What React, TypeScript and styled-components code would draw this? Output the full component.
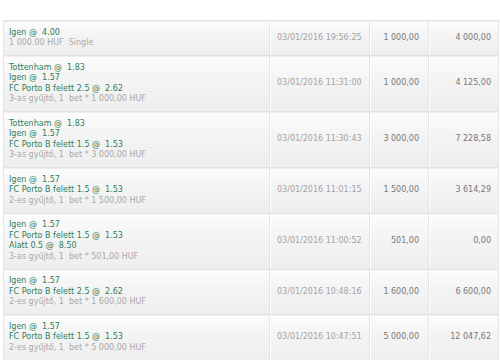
import * as React from 'react';
import styled, { createGlobalStyle } from 'styled-components';

const GlobalStyle = createGlobalStyle`
  html, body {
    margin: 0;
    padding: 0;
    background: #ffffff;
  }
  body {
    font-family: 'DejaVu Sans', Verdana, sans-serif;
  }
`;

const Page = styled.div`
  width: 500px;
  height: 360px;
  overflow: hidden;
  padding: 20px 0 0 3px;
  box-sizing: border-box;
`;

const Table = styled.table`
  width: 495px;
  table-layout: fixed;
  border-collapse: collapse;
  border-left: 1px solid #e6e6e6;
  border-right: 1px solid #e6e6e6;
  font-size: 8px;
`;

const Col = styled.col<{ $width: number }>`
  width: ${(p) => p.$width}px;
`;

const Row = styled.tr`
  border-top: 1px solid #e2e2e2;
  background: linear-gradient(#fcfcfc, #f4f4f4 40%, #eeeeee);
`;

interface CellProps {
  $align?: 'left' | 'right';
  $color?: string;
  $padRight?: number;
}

const Cell = styled.td<CellProps>`
  padding: 6.5px ${(p) => p.$padRight ?? 7}px 6.5px 7px;
  vertical-align: middle;
  text-align: ${(p) => p.$align || 'left'};
  color: ${(p) => p.$color || '#777777'};
  line-height: 10.5px;
  white-space: pre;
  border-left: 1px solid #e4e4e4;
  box-shadow: inset 1px 0 0 #ffffff;

  &:first-child {
    border-left: none;
    box-shadow: none;
    padding-left: 5px;
  }
`;

const Pick = styled.div`
  color: #2f7d58;
`;

const Summary = styled.div`
  color: #a9a9a9;
`;

interface Bet {
  picks: string[];
  summary: string;
  date: string;
  stake: string;
  payout: string;
}

const bets: Bet[] = [
  {
    picks: ['Igen @  4.00'],
    summary: '1 000.00 HUF  Single',
    date: '03/01/2016 19:56:25',
    stake: '1 000,00',
    payout: '4 000,00',
  },
  {
    picks: ['Tottenham @  1.83', 'Igen @  1.57', 'FC Porto B felett 2.5 @  2.62'],
    summary: '3-as gyűjtő, 1  bet * 1 000,00 HUF',
    date: '03/01/2016 11:31:00',
    stake: '1 000,00',
    payout: '4 125,00',
  },
  {
    picks: ['Tottenham @  1.83', 'Igen @  1.57', 'FC Porto B felett 1.5 @  1.53'],
    summary: '3-as gyűjtő, 1  bet * 3 000,00 HUF',
    date: '03/01/2016 11:30:43',
    stake: '3 000,00',
    payout: '7 228,58',
  },
  {
    picks: ['Igen @  1.57', 'FC Porto B felett 1.5 @  1.53'],
    summary: '2-es gyűjtő, 1  bet * 1 500,00 HUF',
    date: '03/01/2016 11:01:15',
    stake: '1 500,00',
    payout: '3 614,29',
  },
  {
    picks: ['Igen @  1.57', 'FC Porto B felett 1.5 @  1.53', 'Alatt 0.5 @  8.50'],
    summary: '3-as gyűjtő, 1  bet * 501,00 HUF',
    date: '03/01/2016 11:00:52',
    stake: '501,00',
    payout: '0,00',
  },
  {
    picks: ['Igen @  1.57', 'FC Porto B felett 2.5 @  2.62'],
    summary: '2-es gyűjtő, 1  bet * 1 600,00 HUF',
    date: '03/01/2016 10:48:16',
    stake: '1 600,00',
    payout: '6 600,00',
  },
  {
    picks: ['Igen @  1.57', 'FC Porto B felett 1.5 @  1.53'],
    summary: '2-es gyűjtő, 1  bet * 5 000,00 HUF',
    date: '03/01/2016 10:47:51',
    stake: '5 000,00',
    payout: '12 047,62',
  },
];

const App = () => (
  <>
    <GlobalStyle />
    <Page>
      <Table>
        <colgroup>
          <Col $width={266} />
          <Col $width={100} />
          <Col $width={59} />
          <Col $width={70} />
        </colgroup>
        <tbody>
          {bets.map((bet) => (
            <Row key={bet.date}>
              <Cell>
                {bet.picks.map((pick) => (
                  <Pick key={pick}>{pick}</Pick>
                ))}
                <Summary>{bet.summary}</Summary>
              </Cell>
              <Cell $color="#a3a3a3">{bet.date}</Cell>
              <Cell $align="right" $padRight={9}>
                {bet.stake}
              </Cell>
              <Cell $align="right">{bet.payout}</Cell>
            </Row>
          ))}
        </tbody>
      </Table>
    </Page>
  </>
);

export default App;
